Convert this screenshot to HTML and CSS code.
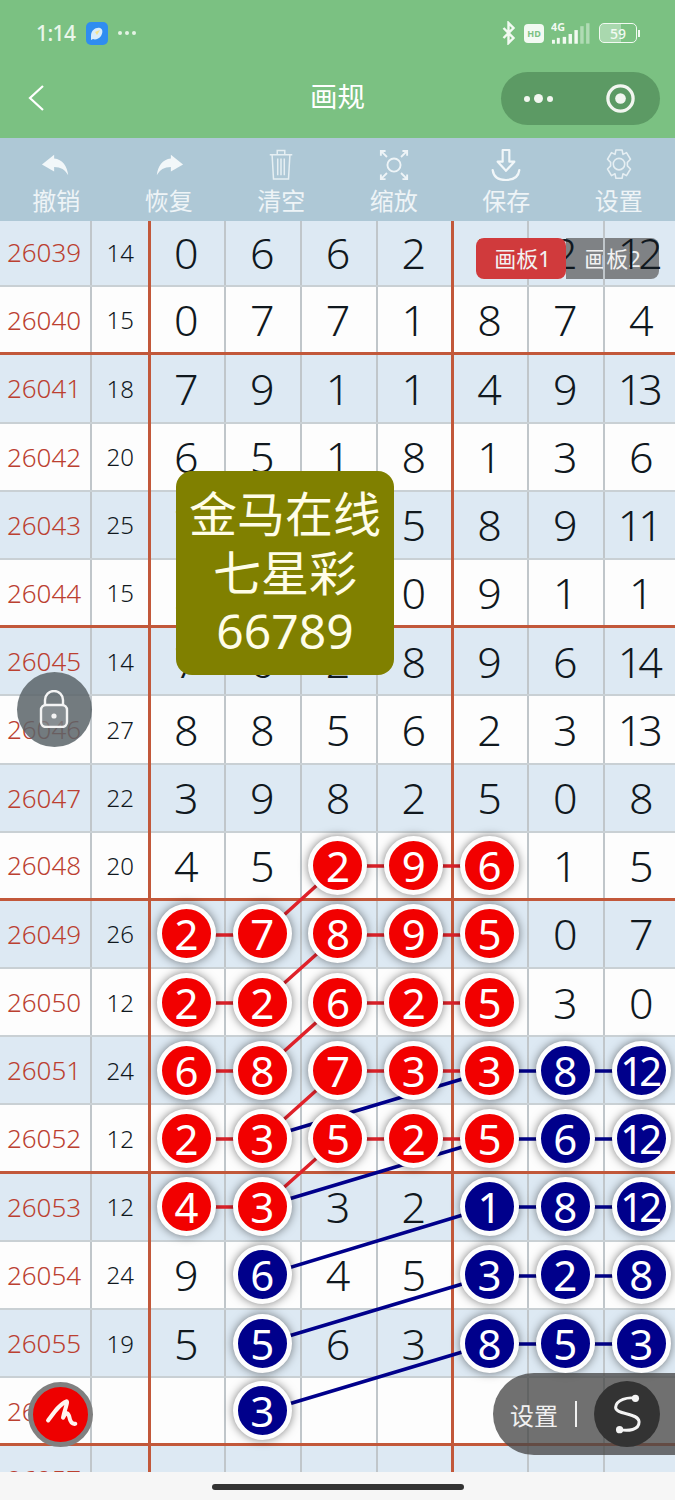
FILE: index.html
```html
<!DOCTYPE html>
<html lang="zh">
<head>
<meta charset="utf-8">
<title>画规</title>
<link rel="stylesheet" href="styles.css">
</head>
<body>
<header class="head">
  <div class="status">
    <div class="status-left">
      <span class="time">1:14</span>
      <svg class="app" viewBox="0 0 22 23"><rect width="22" height="23" rx="5" fill="#2f8df0"/><path d="M5 14c0-6 5-9 9-8 3 .8 3 5 1 8-2 3-6 4-8 3l-2 1z" fill="#d8ecfb"/><path d="M9 10l5-2-3 5z" fill="#f4e28a"/></svg>
      <span class="more"><i></i><i></i><i></i></span>
    </div>
    <div class="status-right">
      <svg class="bt" viewBox="0 0 16 24"><path d="M2.500 7l10 10-5 5V2l5 5-10 10" fill="none" stroke="#f2faf2" stroke-width="2.400"/></svg>
      <span class="hd">HD</span>
      <svg class="sig" viewBox="0 0 40 24"><text x="0" y="10" class="sig-t">4G</text><g fill="#f2faf2"><rect x="1" y="19" width="3" height="4"/><rect x="6" y="17" width="3" height="6"/><rect x="12" y="16" width="3.500" height="7"/><rect x="18" y="13" width="3.500" height="10"/><rect x="24" y="9" width="3.500" height="14"/></g><rect x="30" y="5" width="3.500" height="18" fill="#f2faf2" opacity=".45"/><rect x="36" y="2" width="3.500" height="21" fill="#f2faf2" opacity=".45"/></svg>
      <span class="bat"><span class="bat-num">59</span></span><span class="bat-tip"></span>
    </div>
  </div>
  <nav class="nav">
    <svg class="back" viewBox="0 0 18 28"><path d="M16 2L3 14l13 12" fill="none" stroke="#fff" stroke-width="2.200"/></svg>
    <h1 class="title">画规</h1>
    <div class="capsule">
      <span class="dots"><i></i><i class="big"></i><i></i></span>
      <svg class="target" viewBox="0 0 32 32"><circle cx="16" cy="16" r="13" fill="none" stroke="#f2f6f0" stroke-width="3.400"/><circle cx="16" cy="16" r="5.500" fill="#f2f6f0"/></svg>
    </div>
  </nav>
</header>

<section class="tools">
  <div class="tool"><svg viewBox="0 0 32 38"><path d="M14 8L1 18.500 14 26v-5c7 0 12 3 15 9-1-10-6-17-15-18z" fill="#f2f7f9"/></svg><span>撤销</span></div>
  <div class="tool"><svg viewBox="0 0 32 38"><path d="M18 8l13 10.500L18 26v-5c-7 0-12 3-15 9 1-10 6-17 15-18z" fill="#f2f7f9"/></svg><span>恢复</span></div>
  <div class="tool"><svg viewBox="0 0 32 38"><g fill="none" stroke="#e6eff3" stroke-width="1.600"><path d="M4 8h24M12 8V3.500h8V8M6.500 8l1.500 26h16l1.500-26M12.500 12v18M16 12v18M19.500 12v18"/></g></svg><span>清空</span></div>
  <div class="tool"><svg viewBox="0 0 32 38"><g fill="none" stroke="#eef4f7" stroke-width="2"><circle cx="16" cy="19" r="7"/><path d="M2 9V4h5M2.500 4.500l6 6M30 9V4h-5M29.500 4.500l-6 6M2 29v5h5M2.500 33.500l6-6M30 29v5h-5M29.500 33.500l-6-6"/></g></svg><span>缩放</span></div>
  <div class="tool"><svg viewBox="0 0 36 42"><g fill="none" stroke="#f2f7f9" stroke-width="2.600" stroke-linejoin="round"><path d="M14 3h8v14h6L18 28 8 17h6z"/><path d="M2 27c1 8 7 12 16 12s15-4 16-12" stroke-linecap="round"/></g></svg><span>保存</span></div>
  <div class="tool"><svg viewBox="0 0 34 38"><g fill="none" stroke="#e6eff3" stroke-width="1.800" stroke-linejoin="round"><path d="M13.500 2h7l1 5 4-2 4.500 7.500-3.500 3.500v4l3.500 3.500L25.500 31l-4-2-1 5h-7l-1-5-4 2L4 23.500 7.500 20v-4L4 12.500 8.500 5l4 2z"/><circle cx="17" cy="18" r="6.500"/></g></svg><span>设置</span></div>
</section>

<main class="board">
  <div class="rows">
    <div class="row alt"><span class="per">26039</span><span class="sum">14</span><span class="c">0</span><span class="c">6</span><span class="c">6</span><span class="c">2</span><span class="c">7</span><span class="c over">2</span><span class="c two over">12</span></div>
    <div class="row major"><span class="per">26040</span><span class="sum">15</span><span class="c">0</span><span class="c">7</span><span class="c">7</span><span class="c">1</span><span class="c">8</span><span class="c">7</span><span class="c">4</span></div>
    <div class="row alt"><span class="per">26041</span><span class="sum">18</span><span class="c">7</span><span class="c">9</span><span class="c">1</span><span class="c">1</span><span class="c">4</span><span class="c">9</span><span class="c two">13</span></div>
    <div class="row"><span class="per">26042</span><span class="sum">20</span><span class="c">6</span><span class="c">5</span><span class="c">1</span><span class="c">8</span><span class="c">1</span><span class="c">3</span><span class="c">6</span></div>
    <div class="row alt"><span class="per">26043</span><span class="sum">25</span><span class="c">7</span><span class="c">4</span><span class="c">1</span><span class="c">5</span><span class="c">8</span><span class="c">9</span><span class="c two">11</span></div>
    <div class="row major"><span class="per">26044</span><span class="sum">15</span><span class="c">2</span><span class="c">3</span><span class="c">1</span><span class="c">0</span><span class="c">9</span><span class="c">1</span><span class="c">1</span></div>
    <div class="row alt"><span class="per">26045</span><span class="sum">14</span><span class="c">7</span><span class="c">6</span><span class="c">2</span><span class="c">8</span><span class="c">9</span><span class="c">6</span><span class="c two">14</span></div>
    <div class="row"><span class="per">26046</span><span class="sum">27</span><span class="c">8</span><span class="c">8</span><span class="c">5</span><span class="c">6</span><span class="c">2</span><span class="c">3</span><span class="c two">13</span></div>
    <div class="row alt"><span class="per">26047</span><span class="sum">22</span><span class="c">3</span><span class="c">9</span><span class="c">8</span><span class="c">2</span><span class="c">5</span><span class="c">0</span><span class="c">8</span></div>
    <div class="row major"><span class="per">26048</span><span class="sum">20</span><span class="c">4</span><span class="c">5</span><span class="c"><b class="ball red">2</b></span><span class="c"><b class="ball red">9</b></span><span class="c"><b class="ball red">6</b></span><span class="c">1</span><span class="c">5</span></div>
    <div class="row alt"><span class="per">26049</span><span class="sum">26</span><span class="c"><b class="ball red">2</b></span><span class="c"><b class="ball red">7</b></span><span class="c"><b class="ball red">8</b></span><span class="c"><b class="ball red">9</b></span><span class="c"><b class="ball red">5</b></span><span class="c">0</span><span class="c">7</span></div>
    <div class="row"><span class="per">26050</span><span class="sum">12</span><span class="c"><b class="ball red">2</b></span><span class="c"><b class="ball red">2</b></span><span class="c"><b class="ball red">6</b></span><span class="c"><b class="ball red">2</b></span><span class="c"><b class="ball red">5</b></span><span class="c">3</span><span class="c">0</span></div>
    <div class="row alt"><span class="per">26051</span><span class="sum">24</span><span class="c"><b class="ball red">6</b></span><span class="c"><b class="ball red">8</b></span><span class="c"><b class="ball red">7</b></span><span class="c"><b class="ball red">3</b></span><span class="c"><b class="ball red">3</b></span><span class="c"><b class="ball blue">8</b></span><span class="c"><b class="ball blue two">12</b></span></div>
    <div class="row major"><span class="per">26052</span><span class="sum">12</span><span class="c"><b class="ball red">2</b></span><span class="c"><b class="ball red">3</b></span><span class="c"><b class="ball red">5</b></span><span class="c"><b class="ball red">2</b></span><span class="c"><b class="ball red">5</b></span><span class="c"><b class="ball blue">6</b></span><span class="c"><b class="ball blue two">12</b></span></div>
    <div class="row alt"><span class="per">26053</span><span class="sum">12</span><span class="c"><b class="ball red">4</b></span><span class="c"><b class="ball red">3</b></span><span class="c">3</span><span class="c">2</span><span class="c"><b class="ball blue">1</b></span><span class="c"><b class="ball blue">8</b></span><span class="c"><b class="ball blue two">12</b></span></div>
    <div class="row"><span class="per">26054</span><span class="sum">24</span><span class="c">9</span><span class="c"><b class="ball blue">6</b></span><span class="c">4</span><span class="c">5</span><span class="c"><b class="ball blue">3</b></span><span class="c"><b class="ball blue">2</b></span><span class="c"><b class="ball blue">8</b></span></div>
    <div class="row alt"><span class="per">26055</span><span class="sum">19</span><span class="c">5</span><span class="c"><b class="ball blue">5</b></span><span class="c">6</span><span class="c">3</span><span class="c"><b class="ball blue">8</b></span><span class="c"><b class="ball blue">5</b></span><span class="c"><b class="ball blue">3</b></span></div>
    <div class="row major"><span class="per">26056</span><span class="sum"></span><span class="c"></span><span class="c"><b class="ball blue">3</b></span><span class="c"></span><span class="c"></span><span class="c"></span><span class="c"></span><span class="c"></span></div>
    <div class="row alt"><span class="per">26057</span><span class="sum"></span><span class="c"></span><span class="c"></span><span class="c"></span><span class="c"></span><span class="c"></span><span class="c"></span><span class="c"></span></div>
  </div>

  <i class="vrule vrule-a"></i>
  <i class="vrule vrule-b"></i>

  <svg class="links" viewBox="0 221 675 1251">
    <g class="link-red">
      <path d="M338 866H490M186 935H262M338 935H490M186 1003H262M338 1003H490M186 1071H262M338 1071H490M186 1139H262M338 1139H490M186 1207H262"/>
      <path d="M262 935L338 866M262 1003L338 935M262 1071L338 1003M262 1139L338 1071M262 1207L338 1139"/>
    </g>
    <g class="link-blue">
      <path d="M262 1139L489 1071M262 1207L489 1139M262 1276L489 1207M262 1344L489 1276M262 1412L489 1344"/>
      <path d="M489 1071H641M489 1139H641M489 1207H641M489 1276H641M489 1344H641"/>
    </g>
  </svg>

  <div class="tabs"><span class="tab tab-on">画板1</span><span class="tab tab-off">画板2</span></div>

  <div class="promo">金马在线<br>七星彩<br>66789</div>

  <div class="lock">
    <svg viewBox="0 0 30 38"><path d="M6 16V10a9 9 0 0 1 18 0v6" fill="none" stroke="#f4f4f4" stroke-width="2.400"/><rect x="2" y="15" width="26" height="22" rx="5" fill="#fff" fill-opacity=".15" stroke="#f4f4f4" stroke-width="2.400"/><circle cx="15" cy="26" r="2.600" fill="#f4f4f4"/></svg>
  </div>

  <div class="pen">
    <svg viewBox="0 0 100 100"><path d="M12 66C30 42 48 16 66 10C72 10 60 36 56 58C62 44 70 40 74 54C76 64 80 78 92 76" fill="none" stroke="#fff4f0" stroke-width="12" stroke-linecap="round" stroke-linejoin="round"/></svg>
  </div>

  <div class="pill">
    <span class="pill-text">设置</span>
    <i class="pill-bar"></i>
    <span class="pill-btn">
      <svg viewBox="635 670 85 125"><path d="M703 685C680 680 645 690 643 712C641 735 712 728 714 755C716 782 680 785 655 780" fill="none" stroke="#f4f4f4" stroke-width="9" stroke-linecap="round"/><circle cx="703" cy="685" r="11" fill="#f4f4f4"/><circle cx="655" cy="780" r="11" fill="#f4f4f4"/></svg>
    </span>
  </div>
</main>

<footer class="foot"><i class="home"></i></footer>
</body>
</html>
```

FILE: styles.css
```css
* { box-sizing: border-box; }
html, body { margin: 0; padding: 0; }
body {
  width: 675px;
  height: 1500px;
  overflow: hidden;
  background: #f6f6f6;
  font-family: "Noto Sans", "Noto Sans CJK SC", sans-serif;
  color: #222;
}
i { display: block; font-style: normal; }

/* header */
.head { height: 138px; background: #7bc182; display: flex; flex-direction: column; }
.status { height: 66px; display: flex; justify-content: space-between; align-items: center; padding: 0 35px 0 36px; }
.status-left, .status-right { display: flex; align-items: center; }
.time { font-size: 21px; font-weight: 500; letter-spacing: -.6px; color: #eaf6ea; margin-right: 11px; }
.app { width: 22px; height: 23px; margin-right: 10px; }
.more { display: flex; gap: 3px; }
.more i { width: 4px; height: 4px; border-radius: 50%; background: #e4f3e4; }
.bt { width: 16px; height: 24px; margin-right: 7px; }
.hd { width: 20px; height: 19px; border-radius: 4px; background: #f2faf2; color: #7bc182; font-size: 9px; font-weight: 700; display: flex; align-items: center; justify-content: center; margin-right: 7px; }
.sig { width: 39px; height: 24px; margin-right: 9px; }
.sig-t { font-size: 11px; font-weight: 700; fill: #f2faf2; font-family: "Noto Sans", sans-serif; }
.bat { width: 38px; height: 20px; border: 1.5px solid #f2faf2; border-radius: 5px; display: flex; align-items: center; justify-content: center; background: linear-gradient(90deg, #a9d8ae 0 59%, transparent 59%); }
.bat-num { font-size: 14px; font-weight: 500; color: #f2faf2; }
.bat-tip { width: 2px; height: 7px; background: #f2faf2; margin-left: 1px; }

.nav { flex: 1; display: flex; align-items: flex-start; position: relative; padding: 6px 15px 0 27px; justify-content: space-between; }
.back { width: 18px; height: 28px; margin-top: 12px; }
.title { position: absolute; left: 0; right: 0; top: 12px; margin: 0; text-align: center; font-size: 27.500px; font-weight: 400; line-height: 38px; color: #fff; }
.capsule { width: 159px; height: 53px; border-radius: 27px; background: #5c9a64; display: flex; align-items: center; justify-content: space-between; padding: 0 24px 0 23px; }
.dots { display: flex; align-items: center; gap: 4px; }
.dots i { width: 6px; height: 6px; border-radius: 50%; background: #f2f6f0; }
.dots .big { width: 9px; height: 9px; }
.target { width: 31px; height: 31px; }

/* toolbar */
.tools { height: 83px; background: #aec8d6; display: flex; }
.tool { flex: 1; display: flex; flex-direction: column; align-items: center; }
.tool svg { width: 30px; height: 38px; margin-top: 8px; }
.tool span { font-size: 24px; line-height: 32px; color: #eef4f7; margin-top: 1px; }

/* board */
.board { position: relative; height: 1251px; overflow: hidden; background: #fdfdfd; }
.rows { margin-top: -2px; }
.row { height: 68.19px; display: grid; grid-template-columns: 92px 56.500px repeat(7, 75.8px); background: #fdfdfd; border-bottom: 2px solid #c9d0d4; }
.row.alt { background: #dde9f3; }
.row.major { border-bottom: 3px solid #c2583a; }
.per, .sum, .c { display: flex; align-items: center; justify-content: center; font-weight: 300; }
.per { font-size: 26px; color: #bb4030; padding-right: 4px; box-shadow: inset -2px 0 #c0c6ca; }
.sum { font-size: 24px; color: #10181e; }
.c { font-size: 43px; color: #10181e; box-shadow: inset 2px 0 #c0c6ca; }
.c.two { letter-spacing: -4px; padding-right: 6px; }
.over { position: relative; z-index: 5; }
.vrule { position: absolute; top: 0; bottom: 0; width: 3px; background: #c2583a; z-index: 1; }
.vrule-a { left: 147.500px; }
.vrule-b { left: 450.500px; }

.links { position: absolute; left: 0; top: 0; width: 675px; height: 1251px; z-index: 2; fill: none; }
.link-red { stroke: #e0222a; stroke-width: 3.500; }
.link-blue { stroke: #00008b; stroke-width: 3.500; }

.ball { position: relative; z-index: 3; width: 59px; height: 59px; border-radius: 50%; border: 5px solid #fdfdfd; box-shadow: 0 0 10px rgba(0, 0, 0, .5); display: flex; align-items: center; justify-content: center; font-weight: 400; font-size: 42px; color: #fff; }
.ball.two { font-size: 40px; letter-spacing: -4px; padding-right: 4px; }
.red { background: #f20000; }
.blue { background: #00008b; }

.tabs { position: absolute; left: 476px; top: 17px; display: flex; }
.tab { height: 41px; font-size: 22px; line-height: 41px; color: #f2f2f2; text-align: center; position: relative; }
.tab-on { width: 90px; padding-left: 3px; background: #d03a3c; border-radius: 8px; z-index: 6; }
.tab-off { width: 93px; background: rgba(90, 90, 90, .72); border-radius: 0 8px 8px 0; z-index: 4; }

.promo { position: absolute; left: 176px; top: 250px; width: 218px; height: 204px; border-radius: 16px; background: #808000; color: #fffde8; font-size: 48px; line-height: 58.500px; text-align: center; padding-top: 14px; z-index: 4; }

.lock { position: absolute; left: 17px; top: 451px; width: 75px; height: 75px; border-radius: 50%; background: rgba(90, 100, 105, .85); display: flex; align-items: center; justify-content: center; z-index: 4; }
.lock svg { width: 30px; height: 38px; margin-left: -2px; margin-top: -2px; }

.pen { position: absolute; left: 28px; top: 1161px; width: 65px; height: 65px; border-radius: 50%; background: #ee0000; border: 5px solid #808080; display: flex; align-items: center; justify-content: center; z-index: 4; }
.pen svg { width: 34px; height: 34px; }

.pill { position: absolute; left: 493px; top: 1152px; width: 182px; height: 82px; border-radius: 41px 0 0 41px; background: rgba(72, 72, 72, .78); display: flex; align-items: center; padding-left: 17px; z-index: 4; }
.pill-text { font-size: 24px; color: #f0f0f0; }
.pill-bar { width: 2px; height: 26px; background: #f0f0f0; margin-left: 17px; }
.pill-btn { width: 66px; height: 66px; border-radius: 50%; background: #333; margin-left: 17px; display: flex; align-items: center; justify-content: center; }
.pill-btn svg { width: 28px; height: 42px; }

/* footer */
.foot { height: 28px; display: flex; justify-content: center; padding-top: 12px; }
.home { width: 252px; height: 6px; border-radius: 3px; background: #333; }
```
